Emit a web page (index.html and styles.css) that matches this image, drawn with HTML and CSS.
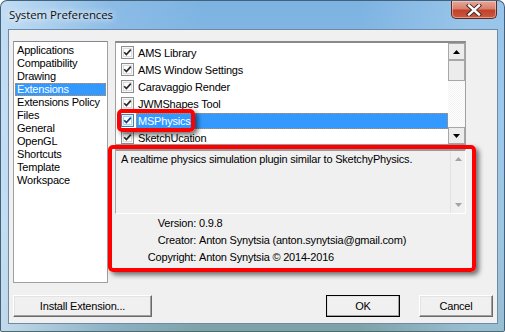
FILE: index.html
```html
<!DOCTYPE html>
<html lang="en">
<head>
    <meta charset="UTF-8">
    <title>System Preferences</title>
    <link rel="stylesheet" href="styles.css">
</head>
<body>
    <div class="window">
        <div class="titlebar">
            <span class="title">System Preferences</span>
            <span class="close-btn">
                <svg width="20" height="12" viewBox="0 0 20 12">
                    <path d="M5 1.5 L15 10.5 M15 1.5 L5 10.5" stroke="#3a2520" stroke-width="4.2" stroke-linecap="square"/>
                    <path d="M5 1.5 L15 10.5 M15 1.5 L5 10.5" stroke="#ffffff" stroke-width="2.4" stroke-linecap="square"/>
                </svg>
            </span>
        </div>
        <div class="client">
            <div class="content">
                <ul class="categories">
                    <li>Applications</li>
                    <li>Compatibility</li>
                    <li>Drawing</li>
                    <li class="selected">Extensions</li>
                    <li>Extensions Policy</li>
                    <li>Files</li>
                    <li>General</li>
                    <li>OpenGL</li>
                    <li>Shortcuts</li>
                    <li>Template</li>
                    <li>Workspace</li>
                </ul>
                <div class="ext-pane">
                    <div class="ext-list">
                        <ul class="ext-items">
                            <li><svg class="check" width="13" height="13" viewBox="0 0 13 13"><rect x="0.5" y="0.5" width="12" height="12" fill="#f6f6f6" stroke="#8e8f8f"/><rect x="2.5" y="2.5" width="8" height="8" fill="#ffffff" stroke="#dcdcdc"/><path d="M3.2 6.2 L5.4 8.6 L9.8 3.6" fill="none" stroke="#2b2b2b" stroke-width="1.7"/></svg><span class="ext-name">AMS Library</span></li>
                            <li><svg class="check" width="13" height="13" viewBox="0 0 13 13"><rect x="0.5" y="0.5" width="12" height="12" fill="#f6f6f6" stroke="#8e8f8f"/><rect x="2.5" y="2.5" width="8" height="8" fill="#ffffff" stroke="#dcdcdc"/><path d="M3.2 6.2 L5.4 8.6 L9.8 3.6" fill="none" stroke="#2b2b2b" stroke-width="1.7"/></svg><span class="ext-name">AMS Window Settings</span></li>
                            <li><svg class="check" width="13" height="13" viewBox="0 0 13 13"><rect x="0.5" y="0.5" width="12" height="12" fill="#f6f6f6" stroke="#8e8f8f"/><rect x="2.5" y="2.5" width="8" height="8" fill="#ffffff" stroke="#dcdcdc"/><path d="M3.2 6.2 L5.4 8.6 L9.8 3.6" fill="none" stroke="#2b2b2b" stroke-width="1.7"/></svg><span class="ext-name">Caravaggio Render</span></li>
                            <li><svg class="check" width="13" height="13" viewBox="0 0 13 13"><rect x="0.5" y="0.5" width="12" height="12" fill="#f6f6f6" stroke="#8e8f8f"/><rect x="2.5" y="2.5" width="8" height="8" fill="#ffffff" stroke="#dcdcdc"/><path d="M3.2 6.2 L5.4 8.6 L9.8 3.6" fill="none" stroke="#2b2b2b" stroke-width="1.7"/></svg><span class="ext-name">JWMShapes Tool</span></li>
                            <li class="selected"><svg class="check" width="13" height="13" viewBox="0 0 13 13"><rect x="0.5" y="0.5" width="12" height="12" fill="#e6f2fc" stroke="#3c7fb1"/><rect x="2.5" y="2.5" width="8" height="8" fill="#ffffff" stroke="#a9d3f2"/><path d="M3.2 6.2 L5.4 8.6 L9.8 3.6" fill="none" stroke="#1d3f6e" stroke-width="1.7"/></svg><span class="ext-name">MSPhysics</span></li>
                            <li><svg class="check" width="13" height="13" viewBox="0 0 13 13"><rect x="0.5" y="0.5" width="12" height="12" fill="#f6f6f6" stroke="#8e8f8f"/><rect x="2.5" y="2.5" width="8" height="8" fill="#ffffff" stroke="#dcdcdc"/><path d="M3.2 6.2 L5.4 8.6 L9.8 3.6" fill="none" stroke="#2b2b2b" stroke-width="1.7"/></svg><span class="ext-name">SketchUcation</span></li>
                        </ul>
                        <div class="scrollbar">
                            <span class="sb-btn"><svg width="7" height="4" viewBox="0 0 7 4"><path d="M3.5 0 L7 4 L0 4 Z" fill="#000"/></svg></span>
                            <span class="sb-thumb"></span>
                            <span class="sb-track"></span>
                            <span class="sb-btn"><svg width="7" height="4" viewBox="0 0 7 4"><path d="M0 0 L7 0 L3.5 4 Z" fill="#000"/></svg></span>
                        </div>
                    </div>
                    <div class="desc">
                        <p class="desc-text">A realtime physics simulation plugin similar to SketchyPhysics.</p>
                        <div class="desc-scroll">
                            <svg width="7" height="4" viewBox="0 0 7 4"><path d="M3.5 0 L7 4 L0 4 Z" fill="#a3a3a3"/></svg>
                            <svg width="7" height="4" viewBox="0 0 7 4"><path d="M0 0 L7 0 L3.5 4 Z" fill="#a3a3a3"/></svg>
                        </div>
                    </div>
                    <div class="info">
                        <div class="info-row"><span class="info-label">Version:</span><span>0.9.8</span></div>
                        <div class="info-row"><span class="info-label">Creator:</span><span>Anton Synytsia (anton.synytsia@gmail.com)</span></div>
                        <div class="info-row"><span class="info-label">Copyright:</span><span>Anton Synytsia © 2014-2016</span></div>
                    </div>
                </div>
            </div>
            <div class="buttons">
                <button class="btn btn-install">Install Extension...</button>
                <button class="btn btn-default">OK</button>
                <button class="btn">Cancel</button>
            </div>
        </div>
        <div class="mark mark-item"></div>
        <div class="mark mark-details"></div>
    </div>
</body>
</html>
```

FILE: styles.css
```css
body {
    margin: 0;
    font-family: 'Liberation Sans', Tahoma, Arial, sans-serif;
    font-size: 11px;
    letter-spacing: -0.2px;
    color: #000;
}
.window {
    position: relative;
    width: 505px;
    height: 332px;
    box-sizing: border-box;
    border: 1px solid #44617c;
    border-bottom-color: #4d6a6e;
    border-radius: 7px 7px 2px 2px;
    padding: 0 6px 7px 7px;
    display: flex;
    flex-direction: column;
    background:
        linear-gradient(90deg, rgba(205,228,247,0.85) 0, rgba(160,200,236,0.4) 110px, rgba(112,172,224,0) 200px, rgba(112,172,224,0) 360px, rgba(170,208,238,0.6) 470px),
        linear-gradient(180deg, #7db3e2 0, #8bbde6 35%, #8fb7cf 70%, #7da2a7 100%);
}
.titlebar {
    height: 28px;
    display: flex;
    align-items: flex-start;
}
.title {
    font-family: 'Open Sans', 'Noto Sans', sans-serif;
    font-size: 11.5px;
    letter-spacing: -0.1px;
    margin-top: 6px;
    margin-left: 1px;
    color: #111;
    text-shadow: 0 0 6px #fff, 0 0 10px #fff;
}
.close-btn {
    margin-left: auto;
    margin-right: 1px;
    width: 46px;
    height: 18px;
    box-sizing: border-box;
    border: 1px solid #5b2b22;
    border-top: none;
    border-radius: 0 0 5px 5px;
    background: linear-gradient(180deg, #e9a797 0, #d9806c 45%, #c3412a 55%, #c95a3d 100%);
    box-shadow: inset 0 0 0 1px rgba(255,220,210,0.5);
    display: flex;
    align-items: center;
    justify-content: center;
}
.client {
    height: 295px;
    box-sizing: border-box;
    border: 1px solid #6f8aa6;
    background: #f0f0f0;
    padding: 11px 4px 6px 4px;
    display: flex;
    flex-direction: column;
}
.content {
    height: 242px;
    display: flex;
    gap: 7px;
}
.categories {
    list-style: none;
    margin: 0;
    padding: 2px 1px;
    width: 95px;
    box-sizing: border-box;
    border: 1px solid #a0a0a0;
    border-top-color: #828790;
    background: #fff;
}
.categories li {
    height: 13px;
    line-height: 13px;
    padding-left: 2px;
    white-space: nowrap;
}
.categories li.selected {
    background: #3399ff;
    color: #fff;
    outline: 1px dotted #d98b3a;
    outline-offset: -1px;
}
.ext-pane {
    width: 351px;
    display: flex;
    flex-direction: column;
}
.ext-list {
    height: 104px;
    box-sizing: border-box;
    border: 1px solid #a0a0a0;
    border-top: 2px solid #8a8a8a;
    background: #fff;
    display: flex;
    overflow: hidden;
}
.ext-items {
    list-style: none;
    margin: 0;
    padding: 1px 0 0 5px;
    flex: 1;
}
.ext-items li {
    height: 17px;
    display: flex;
    align-items: center;
}
.check {
    flex: none;
}
.ext-name {
    flex: 1;
    margin-left: 2px;
    padding-left: 2px;
    height: 16px;
    line-height: 16px;
}
.ext-items li.selected .ext-name {
    background: #3399ff;
    color: #fff;
    outline: 1px dotted #d98b3a;
    outline-offset: -1px;
}
.scrollbar {
    width: 17px;
    display: flex;
    flex-direction: column;
}
.sb-btn, .sb-thumb {
    box-sizing: border-box;
    height: 17px;
    border: 1px solid #a7a7a7;
    background: #ececec;
    display: flex;
    align-items: center;
    justify-content: center;
}
.sb-thumb {
    height: 21px;
}
.sb-track {
    flex: 1;
    background: repeating-conic-gradient(#f2f2f2 0 25%, #ffffff 0 50%) 0 0 / 2px 2px;
}
.desc {
    margin-top: 4px;
    height: 65px;
    box-sizing: border-box;
    border: 1px solid #ffffff;
    border-top: 2px solid #9a9a9a;
    border-left: 1px solid #a8a8a8;
    display: flex;
}
.desc-text {
    flex: 1;
    margin: 0;
    padding: 2px 0 0 5px;
    line-height: 13px;
}
.desc-scroll {
    width: 14px;
    border-left: 1px solid #e2e2e2;
    display: flex;
    flex-direction: column;
    align-items: center;
    justify-content: space-between;
    padding: 6px 0 6px;
}
.info {
    padding-top: 1px;
}
.info-row {
    height: 17px;
    line-height: 17px;
    display: flex;
    white-space: nowrap;
}
.info-label {
    width: 81px;
    text-align: right;
    margin-right: 3px;
}
.buttons {
    margin-top: 12px;
    display: flex;
    gap: 19px;
}
.btn {
    height: 22px;
    width: 74px;
    font-family: inherit;
    font-size: 11px;
    letter-spacing: -0.2px;
    color: #000;
    background: #f0f0f0;
    border: 1px solid;
    border-color: #ffffff #696969 #696969 #ffffff;
    box-shadow: inset -1px -1px 0 #a0a0a0, inset 1px 1px 0 #e3e3e3;
    padding: 0;
}
.btn-install {
    width: 139px;
    margin-right: auto;
}
.btn-default {
    outline: 1px solid #000;
    outline-offset: -1px;
}
.mark {
    position: absolute;
    box-sizing: border-box;
    border: 4px solid #ff0000;
    border-radius: 5px;
    box-shadow: 3px 3px 5px rgba(0,0,0,0.55);
}
.mark-item {
    left: 116px;
    top: 108px;
    width: 78px;
    height: 23px;
}
.mark-details {
    left: 107px;
    top: 144px;
    width: 368px;
    height: 127px;
}
```
